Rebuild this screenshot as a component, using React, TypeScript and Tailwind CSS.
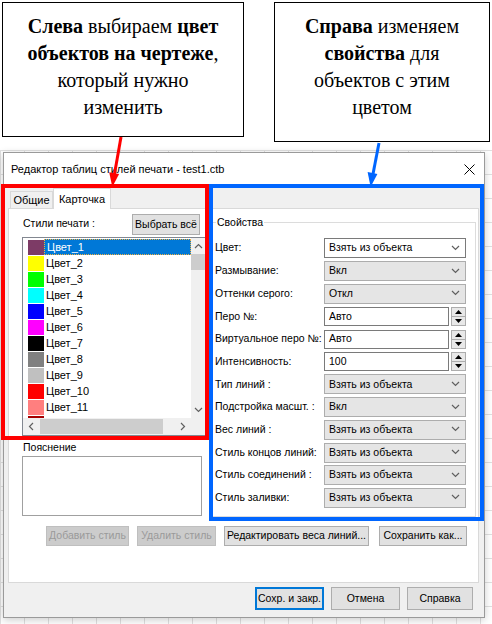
import React from 'react';

type Row = { label: string; value: string; spin?: boolean; white?: boolean };

const swatches = [
  { name: 'Цвет_1', color: '#7d3b66' },
  { name: 'Цвет_2', color: '#ffff00' },
  { name: 'Цвет_3', color: '#00ff00' },
  { name: 'Цвет_4', color: '#00ffff' },
  { name: 'Цвет_5', color: '#0000ff' },
  { name: 'Цвет_6', color: '#ff00ff' },
  { name: 'Цвет_7', color: '#000000' },
  { name: 'Цвет_8', color: '#808080' },
  { name: 'Цвет_9', color: '#c0c0c0' },
  { name: 'Цвет_10', color: '#ff0000' },
  { name: 'Цвет_11', color: '#ff7f7f' },
  { name: '', color: '#a50000' },
];

const rows: Row[] = [
  { label: 'Цвет:', value: 'Взять из объекта', white: true },
  { label: 'Размывание:', value: 'Вкл' },
  { label: 'Оттенки серого:', value: 'Откл' },
  { label: 'Перо №:', value: 'Авто', spin: true },
  { label: 'Виртуальное перо №:', value: 'Авто', spin: true },
  { label: 'Интенсивность:', value: '100', spin: true },
  { label: 'Тип линий :', value: 'Взять из объекта' },
  { label: 'Подстройка масшт. :', value: 'Вкл' },
  { label: 'Вес линий :', value: 'Взять из объекта' },
  { label: 'Стиль концов линий:', value: 'Взять из объекта' },
  { label: 'Стиль соединений :', value: 'Взять из объекта' },
  { label: 'Стиль заливки:', value: 'Взять из объекта' },
];

const Chevron = ({ dir = 'down' }: { dir?: 'down' | 'up' | 'left' | 'right' }) => {
  const d = {
    down: 'M1 2 L4.5 5.5 L8 2',
    up: 'M1 6 L4.5 2.5 L8 6',
    left: 'M6 1 L2.5 4.5 L6 8',
    right: 'M3 1 L6.5 4.5 L3 8',
  }[dir];
  return (
    <svg width="9" height="9" viewBox="0 0 9 9">
      <path d={d} fill="none" stroke="#606060" strokeWidth="1.2" />
    </svg>
  );
};

const Combo = ({ value, white }: { value: string; white?: boolean }) => (
  <div
    className={`flex h-[20px] w-[142px] items-center justify-between border pl-[4px] pr-[5px] ${
      white ? 'border-[#7a7a7a] bg-white' : 'border-[#adadad] bg-[#e5e5e5]'
    }`}
  >
    <span>{value}</span>
    <Chevron />
  </div>
);

const Spin = ({ value }: { value: string }) => (
  <div className="flex h-[19px] w-[142px]">
    <div className="flex flex-1 items-center border border-[#7a7a7a] bg-white pl-[4px]">{value}</div>
    <div className="ml-[2px] flex w-[15px] flex-col border border-[#adadad] bg-[#e8e8e8]">
      <div className="flex flex-1 items-center justify-center border-b border-[#adadad]">
        <svg width="7" height="4" viewBox="0 0 7 4"><path d="M0 4 L3.5 0 L7 4 Z" fill="#000" /></svg>
      </div>
      <div className="flex flex-1 items-center justify-center">
        <svg width="7" height="4" viewBox="0 0 7 4"><path d="M0 0 L3.5 4 L7 0 Z" fill="#000" /></svg>
      </div>
    </div>
  </div>
);

const Btn = ({ children, disabled, focus, className = '' }: { children: React.ReactNode; disabled?: boolean; focus?: boolean; className?: string }) => (
  <div
    className={`flex items-center justify-center whitespace-nowrap border ${
      disabled
        ? 'border-[#bfbfbf] bg-[#cccccc] text-[#9a9a9a]'
        : focus
        ? 'border-[#0078d7] bg-[#e1e1e1] shadow-[inset_0_0_0_1px_#0078d7]'
        : 'border-[#adadad] bg-[#e1e1e1]'
    } ${className}`}
  >
    {children}
  </div>
);

export default function App() {
  return (
    <div className="relative h-[624px] w-[492px] overflow-hidden bg-white">
      {/* Callouts */}
      <div className="flex h-[150px] items-start font-['Liberation_Serif',serif] text-[20px] leading-[27px] text-black">
        <div className="ml-[2px] mt-[2px] h-[135px] w-[242px] border border-black pt-[10px] text-center">
          <b>Слева</b> выбираем <b>цвет</b>
          <br />
          <b>объектов на чертеже</b>,
          <br />
          который нужно
          <br />
          изменить
        </div>
        <div className="ml-[30px] mt-[2px] h-[140px] w-[216px] border border-black pt-[10px] text-center">
          <b>Справа</b> изменяем
          <br />
          <b>свойства</b> для
          <br />
          объектов с этим
          <br />
          цветом
        </div>
      </div>

      {/* Drawing area with the dialog */}
      <div className="h-[474px] bg-white bg-[linear-gradient(#e0e0e0_1px,transparent_1px),linear-gradient(90deg,#e0e0e0_1px,transparent_1px)] bg-[length:24px_24px] pt-[2px]">
        <div className="ml-[3px] flex h-[466px] w-[482px] flex-col border border-[#9a9a9a] bg-[#f0f0f0] font-['Liberation_Sans',sans-serif] text-[10.5px] text-black shadow-[0_2px_8px_rgba(0,0,0,0.2)]">
          {/* Title */}
          <div className="flex h-[32px] shrink-0 items-center justify-between bg-white pl-[7px] pr-[9px]">
            <span className="text-[11px]">Редактор таблиц стилей печати - test1.ctb</span>
            <svg width="11" height="11" viewBox="0 0 11 11">
              <path d="M0.5 0.5 L10.5 10.5 M10.5 0.5 L0.5 10.5" stroke="#000" strokeWidth="1" />
            </svg>
          </div>

          {/* Body */}
          <div className="flex flex-1 flex-col px-[4px] pt-[3px]">
            {/* Tabs */}
            <div className="flex h-[20px] items-end pl-[2px]">
              <div className="flex h-[17px] w-[43px] items-center justify-center border border-b-0 border-[#d9d9d9] bg-[#f0f0f0] text-[11px]">
                Общие
              </div>
              <div className="relative z-10 -mb-px flex h-[21px] w-[58px] items-center justify-center border border-b-0 border-[#d9d9d9] bg-white text-[11px]">
                Карточка
              </div>
            </div>

            {/* Tab page */}
            <div className="flex h-[375px] w-[471px] flex-col border border-[#d9d9d9] bg-white">
              <div className="flex">
                {/* Left column */}
                <div className="ml-[13px] flex w-[184px] flex-col">
                  <div className="flex h-[28px] items-start justify-between pr-[6px] pt-[5px]">
                    <span className="pl-[1px] pt-[2px]">Стили печати :</span>
                    <Btn className="h-[21px] w-[68px]">Выбрать всё</Btn>
                  </div>
                  <div className="flex flex-col border border-[#828790] bg-white">
                    <div className="flex h-[180px]">
                      <div className="flex flex-1 flex-col overflow-hidden pl-[5px] pt-px">
                        {swatches.map((s, i) => (
                          <div key={i} className="flex h-[16px] shrink-0 items-center">
                            <div className="h-[15px] w-[16px] shrink-0" style={{ backgroundColor: s.color }} />
                            <span
                              className={`flex h-[16px] flex-1 items-center pl-[2px] text-[11px] ${
                                i === 0 ? 'border border-dotted border-[#f0b040] bg-[#0078d7] text-white' : ''
                              }`}
                            >
                              {s.name}
                            </span>
                          </div>
                        ))}
                      </div>
                      <div className="flex w-[14px] flex-col bg-[#f0f0f0]">
                        <div className="flex h-[16px] items-center justify-center">
                          <Chevron dir="up" />
                        </div>
                        <div className="h-[16px] bg-[#cdcdcd]" />
                        <div className="flex-1" />
                        <div className="flex h-[16px] items-center justify-center">
                          <Chevron dir="down" />
                        </div>
                      </div>
                    </div>
                    <div className="flex h-[17px] items-center bg-[#f0f0f0]">
                      <div className="flex w-[17px] justify-center">
                        <Chevron dir="left" />
                      </div>
                      <div className="h-[15px] w-[123px] bg-[#cdcdcd]" />
                      <div className="flex-1" />
                      <div className="flex w-[17px] justify-center">
                        <Chevron dir="right" />
                      </div>
                      <div className="w-[14px]" />
                    </div>
                  </div>
                  <span className="mt-[2px] pl-[1px] leading-[18px]">Пояснение</span>
                  <div className="h-[60px] w-[180px] border border-[#a0a0a0] bg-white" />
                </div>

                {/* Properties group */}
                <div className="relative ml-[5px] mt-[13px] h-[295px] w-[265px] border border-[#dcdcdc]">
                  <span className="absolute -top-[8px] left-[4px] bg-white px-px">Свойства</span>
                  <div className="flex flex-col pl-[3px] pt-[14px]">
                    {rows.map((r) => (
                      <div key={r.label} className="flex h-[22.7px] items-center">
                        <span className="w-[109px] shrink-0 whitespace-nowrap">{r.label}</span>
                        {r.spin ? <Spin value={r.value} /> : <Combo value={r.value} white={r.white} />}
                      </div>
                    ))}
                  </div>
                </div>
              </div>

              {/* Style buttons */}
              <div className="mt-[9px] flex h-[20px] pl-[37px]">
                <Btn disabled className="w-[83px]">Добавить стиль</Btn>
                <Btn disabled className="ml-[8px] w-[79px]">Удалить стиль</Btn>
                <Btn className="ml-[8px] w-[145px]">Редактировать веса линий...</Btn>
                <Btn className="ml-[10px] w-[88px]">Сохранить как...</Btn>
              </div>
            </div>

            {/* Dialog buttons */}
            <div className="mt-[4px] flex h-[23px] justify-end pr-[7px]">
              <Btn focus className="w-[69px]">Сохр. и закр.</Btn>
              <Btn className="ml-[7px] w-[69px]">Отмена</Btn>
              <Btn className="ml-[7px] w-[66px]">Справка</Btn>
            </div>
          </div>
        </div>
      </div>

      {/* Annotation frames */}
      <div className="pointer-events-none absolute left-[1px] top-[184px] h-[256px] w-[208px] border-4 border-[#ff0000]" />
      <div className="pointer-events-none absolute left-[209px] top-[184px] h-[337px] w-[275px] border-4 border-[#0066ff]" />

      {/* Arrows */}
      <svg className="pointer-events-none absolute left-0 top-0" width="492" height="624" viewBox="0 0 492 624">
        <line x1="121" y1="137" x2="114.5" y2="174" stroke="#ff0000" strokeWidth="3" />
        <polygon points="112.3,187 109.2,172.2 119.1,173.9" fill="#ff0000" />
        <line x1="379" y1="143" x2="373" y2="174" stroke="#0066ff" strokeWidth="3" />
        <polygon points="370.6,187 367.6,172.1 377.4,173.9" fill="#0066ff" />
      </svg>
    </div>
  );
}
